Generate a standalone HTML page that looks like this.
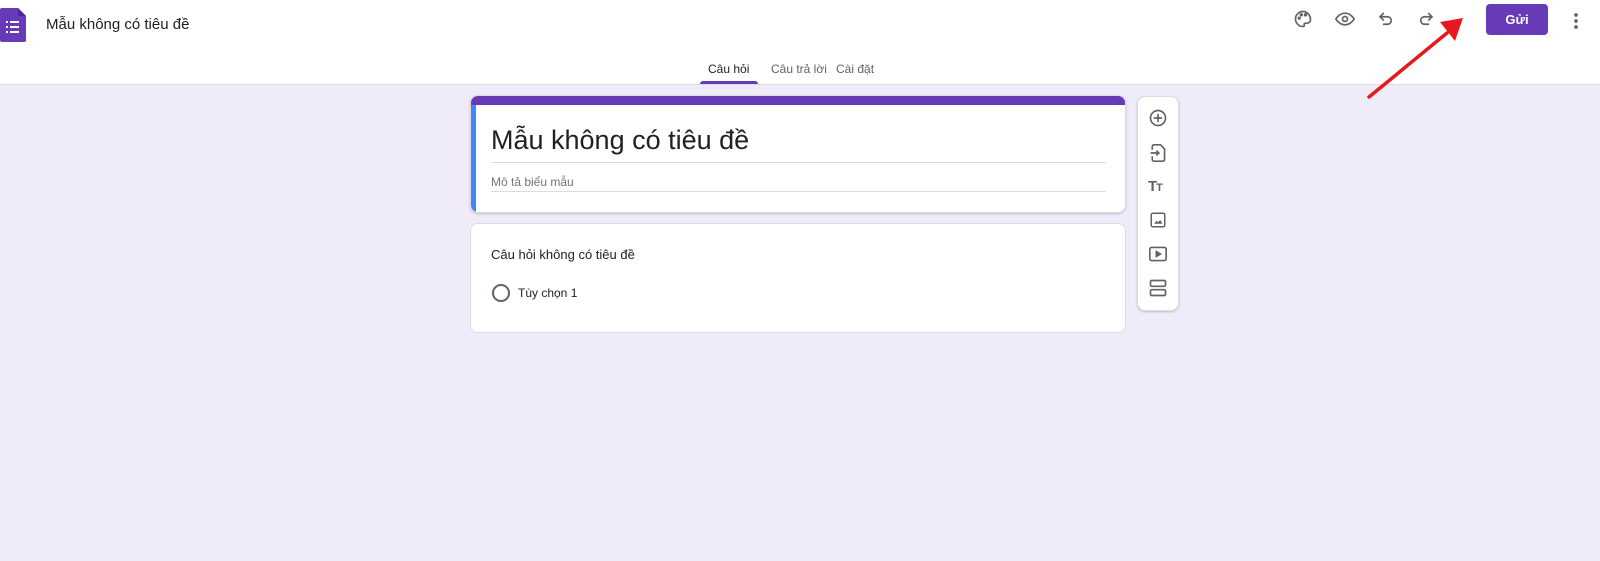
<!DOCTYPE html>
<html><head><meta charset="utf-8"><style>
*{box-sizing:border-box;margin:0;padding:0}
body{width:1600px;height:561px;background:#f0ebf8;font-family:"Liberation Sans",Arial,sans-serif;position:relative;overflow:hidden;color:#202124}
.hdr{position:absolute;left:0;top:0;width:1600px;height:85px;background:#fff;border-bottom:1px solid #dadce0}
.abs{position:absolute}
.card{position:absolute;background:#fff;border-radius:8px;border:1px solid #dadce0}
</style></head><body>
<div class="hdr">
 <svg class="abs" style="left:0;top:8px" width="26" height="34" viewBox="0 0 26 34"><path d="M2 0h16l8 8v24a2 2 0 0 1-2 2H2a2 2 0 0 1-2-2V2a2 2 0 0 1 2-2z" fill="#673ab7"/><path d="M18 0v8h8z" fill="#4527a0"/><g fill="#fff"><rect x="6" y="13" width="2" height="2"/><rect x="10" y="13" width="9" height="2"/><rect x="6" y="18" width="2" height="2"/><rect x="10" y="18" width="9" height="2"/><rect x="6" y="23" width="2" height="2"/><rect x="10" y="23" width="9" height="2"/></g></svg>
 <div class="abs" style="left:46px;top:16px;font-size:15px;color:#202124">Mẫu không có tiêu đề</div>
 <svg class="abs" style="left:1293px;top:9px" width="20" height="20" viewBox="0 0 24 24" fill="none" stroke="#5f6368" stroke-width="2"><path d="M12 3a9 9 0 0 0 0 18c1.5 0 2-1 1.5-2s0-2 1.5-2h2a4 4 0 0 0 4-4c0-5.5-4-10-9-10z"/><circle cx="7.5" cy="11" r="1" fill="#5f6368"/><circle cx="10" cy="7" r="1" fill="#5f6368"/><circle cx="15" cy="7" r="1" fill="#5f6368"/></svg>
 <svg class="abs" style="left:1334px;top:9px" width="22" height="20" viewBox="0 0 24 24" fill="none" stroke="#5f6368" stroke-width="2"><path d="M1 12s4-7 11-7 11 7 11 7-4 7-11 7S1 12 1 12z"/><circle cx="12" cy="12" r="3"/></svg>
 <svg class="abs" style="left:1377px;top:10px" width="18" height="18" viewBox="0 0 24 24" fill="none" stroke="#5f6368" stroke-width="2.2"><path d="M9 4L4 9l5 5"/><path d="M4 9h10a5 5 0 0 1 0 10H8"/></svg>
 <svg class="abs" style="left:1417px;top:10px" width="18" height="18" viewBox="0 0 24 24" fill="none" stroke="#5f6368" stroke-width="2.2"><path d="M15 4l5 5-5 5"/><path d="M20 9H10a5 5 0 0 0 0 10h6"/></svg>
 <div class="abs" style="left:1486px;top:4px;width:62px;height:31px;background:#673ab7;border-radius:4px;color:#fff;font-size:13px;font-weight:bold;text-align:center;line-height:31px">Gửi</div>
 <div class="abs" style="left:1574px;top:12px;width:4px;height:18px;background:radial-gradient(circle,#5f6368 1.7px,transparent 2px) 0 0/4px 6px"></div>
 <div class="abs" style="left:708px;top:62px;font-size:12px;color:#202124">Câu hỏi</div>
 <div class="abs" style="left:700px;top:81px;width:58px;height:3px;background:#673ab7;border-radius:3px 3px 0 0"></div>
 <div class="abs" style="left:771px;top:62px;font-size:12px;color:#5f6368">Câu trả lời</div>
 <div class="abs" style="left:836px;top:62px;font-size:12px;color:#5f6368">Cài đặt</div>
</div>
<div class="card" style="left:470px;top:95px;width:656px;height:118px;overflow:hidden;box-shadow:0 1px 2px rgba(0,0,0,.2)">
 <div class="abs" style="left:0;top:0;width:656px;height:9px;background:#673ab7"></div>
 <div class="abs" style="left:0;top:9px;width:5px;height:110px;background:#4285f4"></div>
 <div class="abs" style="left:20px;top:29px;font-size:27px;color:#202124">Mẫu không có tiêu đề</div>
 <div class="abs" style="left:20px;top:66px;width:615px;height:1px;background:#dadce0"></div>
 <div class="abs" style="left:20px;top:79px;font-size:12px;color:#70757a">Mô tả biểu mẫu</div>
 <div class="abs" style="left:20px;top:95px;width:615px;height:1px;background:#dadce0"></div>
</div>
<div class="card" style="left:470px;top:223px;width:656px;height:110px">
 <div class="abs" style="left:20px;top:23px;font-size:13px">Câu hỏi không có tiêu đề</div>
 <div class="abs" style="left:21px;top:60px;width:18px;height:18px;border:2px solid #5f6368;border-radius:50%"></div>
 <div class="abs" style="left:47px;top:62px;font-size:12px">Tùy chọn 1</div>
</div>
<div class="card" style="left:1137px;top:96px;width:42px;height:215px;box-shadow:0 1px 2px rgba(0,0,0,.2)">
 <svg class="abs" style="left:10px;top:11px" width="20" height="20" viewBox="0 0 24 24" fill="none" stroke="#5f6368" stroke-width="2"><circle cx="12" cy="12" r="9"/><path d="M12 7v10M7 12h10"/></svg>
 <svg class="abs" style="left:11px;top:46px" width="18" height="20" viewBox="0 0 22 24" fill="none" stroke="#5f6368" stroke-width="2"><path d="M4 8V4a2 2 0 0 1 2-2h8l5 5v13a2 2 0 0 1-2 2H6a2 2 0 0 1-2-2v-4"/><path d="M2 12h10M9 9l3 3-3 3"/></svg>
 <div class="abs" style="left:10px;top:81px;font-size:15px;font-weight:bold;color:#5f6368;letter-spacing:-1px">T<span style="font-size:11px">T</span></div>
 <svg class="abs" style="left:11px;top:114px" width="18" height="18" viewBox="0 0 24 24" fill="none" stroke="#5f6368" stroke-width="2"><rect x="3" y="3" width="18" height="18" rx="2"/><path d="M7 17l3-4 2 2 3-3 3 5z" fill="#5f6368" stroke="none"/></svg>
 <svg class="abs" style="left:10px;top:148px" width="20" height="18" viewBox="0 0 24 22" fill="none" stroke="#5f6368" stroke-width="2"><rect x="2" y="3" width="20" height="16" rx="2"/><path d="M10 8v6l5-3z" fill="#5f6368"/></svg>
 <svg class="abs" style="left:10px;top:181px" width="20" height="20" viewBox="0 0 24 24" fill="none" stroke="#5f6368" stroke-width="2"><rect x="3" y="3" width="18" height="7" rx="1.5"/><rect x="3" y="14" width="18" height="7" rx="1.5"/></svg>
</div>
<svg class="abs" style="left:0;top:0" width="1600" height="561"><line x1="1369" y1="97" x2="1447" y2="33" stroke="#e8191e" stroke-width="3.5" stroke-linecap="round"/><polygon points="1463,18 1440,22 1455,41" fill="#e8191e"/></svg>
</body></html>
